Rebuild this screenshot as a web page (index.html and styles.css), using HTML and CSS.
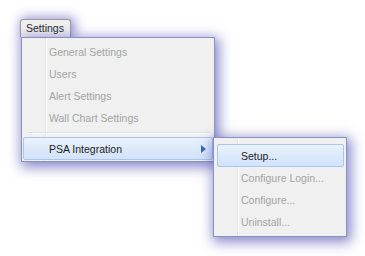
FILE: index.html
```html
<!doctype html>
<html>
<head>
<meta charset="utf-8">
<link rel="stylesheet" href="styles.css">
<title>Settings menu</title>
</head>
<body>
<div class="menubar">
	<div class="tab">Settings</div>
	<div class="menu">
		<div class="item off">General Settings</div>
		<div class="item off">Users</div>
		<div class="item off">Alert Settings</div>
		<div class="item off">Wall Chart Settings</div>
		<div class="sep"></div>
		<div class="item hot">PSA Integration<span class="arrow"></span></div>

		<div class="menu sub">
			<div class="item hot">Setup...</div>
			<div class="item off">Configure Login...</div>
			<div class="item off">Configure...</div>
			<div class="item off">Uninstall...</div>
		</div>
	</div>
</div>
</body>
</html>
```

FILE: styles.css
```css
html, body {
    height: 100%;
}
body {
    margin: 0;
    background: white;
    font-family: "Liberation Sans", Arial, sans-serif;
    font-size: 10.5px;
    color: #1e1e1e;
}
.menubar {
    padding: 19px 0 0 20px;
    height: 220px;
}
.tab {
    width: 44px;
    height: 17px;
    line-height: 17px;
    padding-left: 5px;
    background: #f0f0f0;
    color: #2a2a2a;
    border: 1px solid #9a9a9a;
    border-bottom: 0;
    border-radius: 3px 3px 0 0;
    box-shadow: 2px 0 11px 2px rgba(70, 70, 180, 0.55);
    position: relative;
    z-index: 1;
}
.menu {
    position: relative;
    width: 192px;
    margin-left: 1px;
    padding: 3px 0 1px 0;
    background: #f0f0f0;
    border: 1px solid #8792c2;
    box-shadow: 2px 3px 12px 2px rgba(60, 60, 170, 0.62);
    z-index: 2;
}
/* gutter line */
.menu:before {
    content: "";
    position: absolute;
    top: 0;
    bottom: 0;
    left: 23px;
    width: 1px;
    background: #e2e3e3;
    border-right: 1px solid #fff;
}
.item {
    position: relative;
    height: 22px;
    line-height: 22px;
    padding-left: 25px;
    margin: 0 1px;
    border: 1px solid transparent;
    border-width: 0 1px;
}
.off {
    color: #a3a3a3;
}
.hot {
    height: 21px;
    border: 1px solid #a9c6ee;
    border-radius: 2px;
    background: linear-gradient(#eaf2fd, #dde9fb 50%, #d2e3fa);
    color: #1e1e1e;
}
.sep {
    position: relative;
    height: 8px;
    margin: 0 4px 0 5px;
}
.sep:before {
    content: "";
    position: absolute;
    left: 0;
    right: 0;
    top: 3px;
    height: 1px;
    background: #e0e0e0;
    border-bottom: 1px solid #fff;
}
.arrow {
    position: absolute;
    right: 6px;
    top: 7px;
    border-left: 5px solid #3568b8;
    border-top: 4px solid transparent;
    border-bottom: 4px solid transparent;
}
.sub {
    position: absolute;
    left: 190px;
    top: 99px;
    width: 132px;
    padding: 6px 0 3px 0;
}
.sub .item {
    padding-left: 23px;
    margin: 0 2px 0 3px;
}
```
